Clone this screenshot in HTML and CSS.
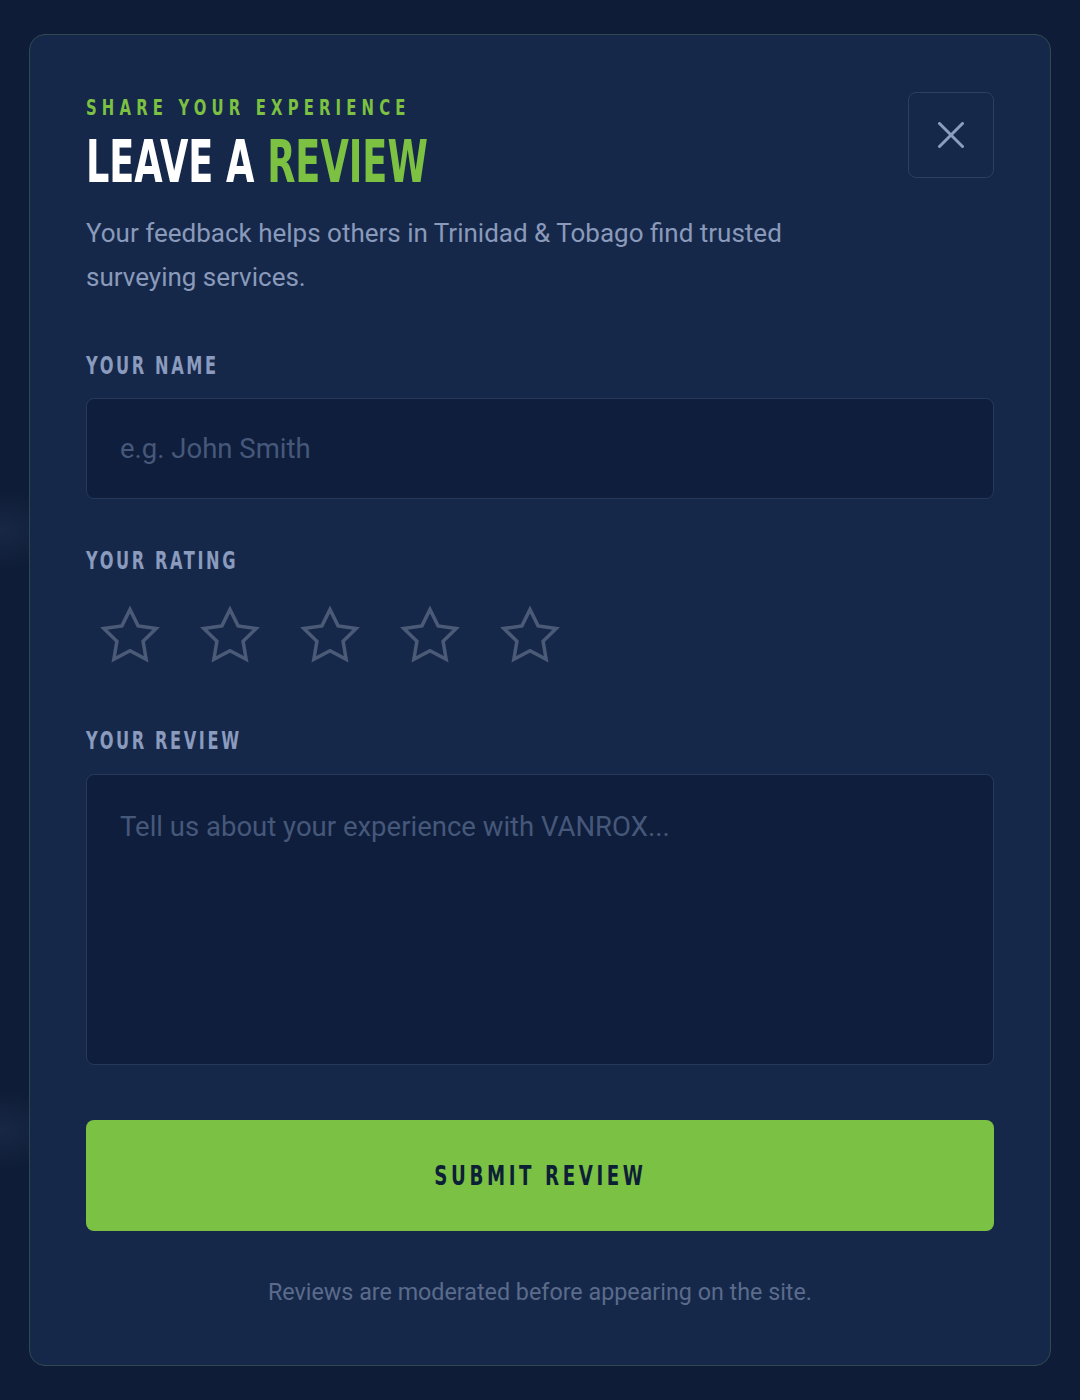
FILE: index.html
```html
<!DOCTYPE html>
<html lang="en">
<head>
<meta charset="utf-8">
<title>Leave a Review</title>
<link rel="stylesheet" href="styles.css">
</head>
<body>
<div class="overlay">
  <section class="modal">
    <header class="modal-head">
      <div class="titles">
        <p class="eyebrow"><span class="squeeze">SHARE YOUR EXPERIENCE</span></p>
        <h2 class="title"><span class="title-inner">LEAVE A <em>REVIEW</em></span></h2>
      </div>
      <button class="close" type="button" aria-label="Close">
        <svg width="26" height="26" viewBox="0 0 26 26" fill="none" stroke="currentColor" stroke-width="3" stroke-linecap="round">
          <line x1="1.5" y1="1.5" x2="24.5" y2="24.5"/>
          <line x1="24.5" y1="1.5" x2="1.5" y2="24.5"/>
        </svg>
      </button>
    </header>
    <p class="intro">Your feedback helps others in Trinidad &amp; Tobago find trusted surveying services.</p>
    <form class="form">
      <div class="field">
        <label class="label" for="name"><span class="squeeze">YOUR NAME</span></label>
        <input class="input" id="name" type="text" placeholder="e.g. John Smith">
      </div>
      <div class="field">
        <span class="label"><span class="squeeze">YOUR RATING</span></span>
        <div class="stars">
          <button class="star" type="button" aria-label="1 star"><svg width="64" height="64" viewBox="0 0 64 64"><polygon points="32,5.5 40.08,21.88 58.16,24.5 45.08,37.25 48.16,55.25 32,46.75 15.84,55.25 18.92,37.25 5.84,24.5 23.92,21.88"/></svg></button>
          <button class="star" type="button" aria-label="2 stars"><svg width="64" height="64" viewBox="0 0 64 64"><polygon points="32,5.5 40.08,21.88 58.16,24.5 45.08,37.25 48.16,55.25 32,46.75 15.84,55.25 18.92,37.25 5.84,24.5 23.92,21.88"/></svg></button>
          <button class="star" type="button" aria-label="3 stars"><svg width="64" height="64" viewBox="0 0 64 64"><polygon points="32,5.5 40.08,21.88 58.16,24.5 45.08,37.25 48.16,55.25 32,46.75 15.84,55.25 18.92,37.25 5.84,24.5 23.92,21.88"/></svg></button>
          <button class="star" type="button" aria-label="4 stars"><svg width="64" height="64" viewBox="0 0 64 64"><polygon points="32,5.5 40.08,21.88 58.16,24.5 45.08,37.25 48.16,55.25 32,46.75 15.84,55.25 18.92,37.25 5.84,24.5 23.92,21.88"/></svg></button>
          <button class="star" type="button" aria-label="5 stars"><svg width="64" height="64" viewBox="0 0 64 64"><polygon points="32,5.5 40.08,21.88 58.16,24.5 45.08,37.25 48.16,55.25 32,46.75 15.84,55.25 18.92,37.25 5.84,24.5 23.92,21.88"/></svg></button>
        </div>
      </div>
      <div class="field">
        <label class="label label-review" for="review"><span class="squeeze">YOUR REVIEW</span></label>
        <textarea class="textarea" id="review" placeholder="Tell us about your experience with VANROX..."></textarea>
      </div>
      <button class="submit" type="button"><span class="squeeze squeeze-center">SUBMIT REVIEW</span></button>
    </form>
    <p class="note">Reviews are moderated before appearing on the site.</p>
  </section>
</div>
</body>
</html>
```

FILE: styles.css
```css
* {
  box-sizing: border-box;
}

html, body {
  margin: 0;
  padding: 0;
}

body {
  background: #0e1c38;
  font-family: Roboto, "Noto Sans", sans-serif;
  color: #8a9aba;
}

.overlay {
  min-height: 100vh;
  display: flex;
  align-items: center;
  justify-content: center;
  background:
    radial-gradient(ellipse 60px 40px at 0 530px, rgba(60, 80, 110, 0.22), transparent),
    radial-gradient(ellipse 60px 40px at 0 1130px, rgba(60, 80, 110, 0.22), transparent),
    #0e1c38;
}

.modal {
  width: 1022px;
  background: #16284a;
  border: 1px solid #2e4a4e;
  border-radius: 16px;
  padding: 58px 56px 57px 56px;
}

.modal-head {
  display: flex;
  justify-content: space-between;
  align-items: flex-start;
  gap: 24px;
}

/* condensed display type */
.eyebrow,
.title,
.label,
.submit {
  font-family: "Liberation Sans Narrow", "DejaVu Sans Condensed", "DejaVu Sans", sans-serif;
  font-stretch: condensed;
  font-weight: 700;
}

.squeeze {
  display: inline-block;
  transform: scaleX(0.75);
  transform-origin: left center;
  white-space: nowrap;
}

.squeeze-center {
  transform-origin: center center;
}

.eyebrow {
  margin: 3px 0 0;
  font-size: 22px;
  line-height: 24px;
  letter-spacing: 6.9px;
  color: #7cc142;
}

.title {
  margin: 12px 0 0;
  font-size: 59px;
  line-height: 59px;
  color: #ffffff;
  white-space: nowrap;
}

.title-inner {
  display: inline-block;
  transform: scaleX(0.69);
  transform-origin: left center;
}

.title em {
  font-style: normal;
  color: #7cc142;
}

.close {
  flex: none;
  width: 86px;
  height: 86px;
  margin-top: -1px;
  display: flex;
  align-items: center;
  justify-content: center;
  background: transparent;
  border: 1px solid #2d3e5e;
  border-radius: 8px;
  color: #8c9dbf;
  padding: 0;
}

.intro {
  margin: 20px 0 0;
  max-width: 760px;
  font-size: 26px;
  line-height: 44px;
  color: #8a9aba;
}

.form {
  margin-top: 53px;
  display: flex;
  flex-direction: column;
}

.field {
  display: flex;
  flex-direction: column;
  margin-bottom: 48px;
}

.field:last-of-type {
  margin-bottom: 55px;
}

.label {
  display: block;
  margin-bottom: 18px;
  font-size: 24px;
  line-height: 28px;
  letter-spacing: 3.45px;
  color: #8a9bbe;
}

.label-review {
  margin-bottom: 19px;
}

.input,
.textarea {
  width: 100%;
  background: #0f1e3c;
  border: 1px solid #26395a;
  border-radius: 8px;
  font-family: Roboto, "Noto Sans", sans-serif;
  font-size: 27.5px;
  color: #c8d3e8;
  outline: none;
}

.input {
  height: 101px;
  padding: 0 33px;
}

.textarea {
  height: 291px;
  padding: 36px 33px;
  line-height: 32px;
  resize: none;
  display: block;
}

.input::placeholder,
.textarea::placeholder {
  color: #46587a;
  opacity: 1;
}

.stars {
  display: flex;
  gap: 12px;
}

.star {
  width: 88px;
  height: 86px;
  padding: 11px 12px;
  background: transparent;
  border: 0;
  display: flex;
  align-items: flex-start;
  justify-content: flex-start;
}

.star svg {
  display: block;
  fill: none;
  stroke: #4b5a76;
  stroke-width: 3.5;
  stroke-linejoin: miter;
}

.submit {
  width: 100%;
  height: 111px;
  background: #7bc143;
  border: 0;
  border-radius: 8px;
  padding: 0;
  font-size: 27px;
  letter-spacing: 4.8px;
  color: #0d1f36;
}

.note {
  margin: 45px 0 0;
  text-align: center;
  font-size: 23.3px;
  line-height: 32px;
  color: #5a6b8b;
}
```
